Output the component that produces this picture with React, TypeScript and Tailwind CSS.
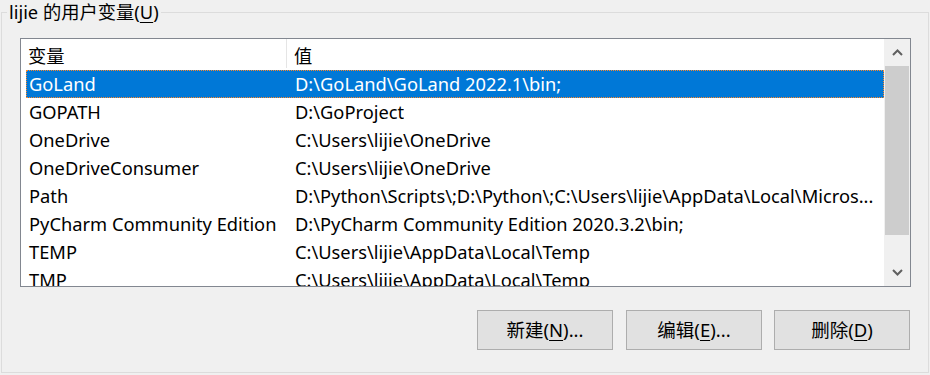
import React from "react";

const rows = [
  { name: "GoLand", value: "D:\\GoLand\\GoLand 2022.1\\bin;" },
  { name: "GOPATH", value: "D:\\GoProject" },
  { name: "OneDrive", value: "C:\\Users\\lijie\\OneDrive" },
  { name: "OneDriveConsumer", value: "C:\\Users\\lijie\\OneDrive" },
  {
    name: "Path",
    value: "D:\\Python\\Scripts\\;D:\\Python\\;C:\\Users\\lijie\\AppData\\Local\\Micros...",
  },
  { name: "PyCharm Community Edition", value: "D:\\PyCharm Community Edition 2020.3.2\\bin;" },
  { name: "TEMP", value: "C:\\Users\\lijie\\AppData\\Local\\Temp" },
  { name: "TMP", value: "C:\\Users\\lijie\\AppData\\Local\\Temp" },
];

const font = {
  fontFamily: '"Noto Sans", "Noto Sans CJK SC", sans-serif',
};

const Chevron = ({ up }: { up?: boolean }) => (
  <svg width="11" height="7" viewBox="0 0 11 7" className="block">
    <path
      d={up ? "M1 6 L5.5 1.5 L10 6" : "M1 1 L5.5 5.5 L10 1"}
      fill="none"
      stroke="#606060"
      strokeWidth="2"
    />
  </svg>
);

const DialogButton = ({ label, mnemonic, tail }: { label: string; mnemonic: string; tail: string }) => (
  <button className="w-[136px] h-[40px] bg-[#e1e1e1] border border-[#adadad] text-[18.5px] text-black flex items-center justify-center">
    {label}(<span className="underline underline-offset-[3px]">{mnemonic}</span>){tail}
  </button>
);

export default function App() {
  return (
    <div
      className="w-[930px] h-[375px] bg-[#f0f0f0] overflow-hidden text-black"
      style={font}
    >
      {/* Group box */}
      <fieldset className="ml-[1px] w-[928px] h-[373px] border border-[#dcdcdc] px-0 pt-0 pb-0 m-0 min-w-0">
        <legend className="ml-[5px] px-[2px] text-[18.3px] leading-[24px]">
          lijie 的用户变量(<span className="underline underline-offset-[3px]">U</span>)
        </legend>

        {/* List view */}
        <div className="ml-[18px] mt-[14px] w-[891px] h-[249px] border border-[#828790] bg-white flex">
          <div className="flex-1 overflow-hidden">
            {/* Header */}
            <div className="h-[31px] flex text-[18.3px]">
              <div className="w-[266px] pl-[7px] pt-[3px] border-r border-[#e5e5e5] h-[29px]">变量</div>
              <div className="pl-[7px] pt-[3px]">值</div>
            </div>
            {rows.map((r, i) => {
              const sel = i === 0;
              return (
                <div
                  key={r.name}
                  className={`ml-[5px] h-[28px] flex items-center text-[18.3px] whitespace-nowrap ${
                    sel
                      ? "bg-[#0078d7] text-white border border-dotted border-[#ff8728]"
                      : "border border-transparent"
                  }`}
                >
                  <div className="w-[266px] pl-[2px] overflow-hidden">{r.name}</div>
                  <div className="pl-[2px] overflow-hidden">{r.value}</div>
                </div>
              );
            })}
          </div>

          {/* Scrollbar */}
          <div className="w-[26px] bg-[#f0f0f0] flex flex-col">
            <div className="h-[27px] flex items-center justify-center">
              <Chevron up />
            </div>
            <div className="mx-[1px] h-[169px] bg-[#cdcdcd]" />
            <div className="flex-1" />
            <div className="h-[27px] flex items-center justify-center">
              <Chevron />
            </div>
          </div>
        </div>

        {/* Buttons */}
        <div className="mt-[23px] flex pl-[475px]">
          <DialogButton label="新建" mnemonic="N" tail="..." />
          <div className="w-[13px]" />
          <DialogButton label="编辑" mnemonic="E" tail="..." />
          <div className="w-[12px]" />
          <DialogButton label="删除" mnemonic="D" tail="" />
        </div>
      </fieldset>
    </div>
  );
}
